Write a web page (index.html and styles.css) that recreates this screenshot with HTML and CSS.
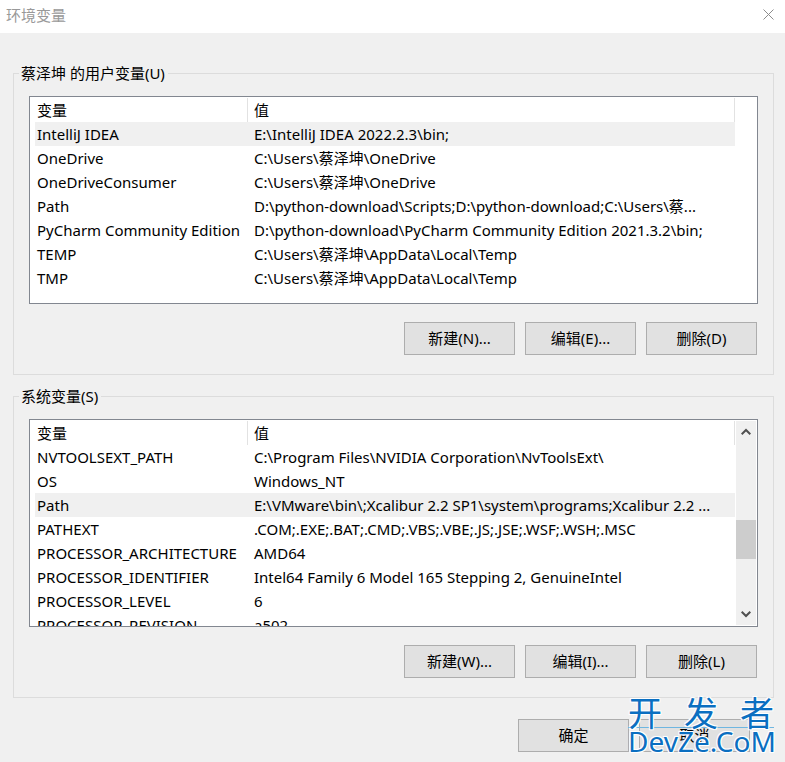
FILE: index.html
```html
<!DOCTYPE html>
<html lang="zh-CN">
<head>
<meta charset="utf-8">
<title>环境变量</title>
<link rel="stylesheet" href="styles.css">
</head>
<body>
<header class="titlebar">
  <h1 class="title">环境变量</h1>
  <button class="close" type="button" aria-label="关闭">
    <svg width="11" height="11" viewBox="0 0 11 11"><path d="M.5 .5l10 10M10.5 .5l-10 10" fill="none" stroke="#8c8c8c"/></svg>
  </button>
</header>
<main class="dialog">
  <fieldset class="group">
    <legend>蔡泽坤 的用户变量(U)</legend>
    <div class="list">
      <table class="vars">
        <thead><tr><th class="name">变量</th><th>值</th></tr></thead>
        <tbody>
          <tr class="selected"><td>IntelliJ IDEA</td><td>E:\IntelliJ IDEA 2022.2.3\bin;</td></tr>
          <tr><td>OneDrive</td><td>C:\Users\蔡泽坤\OneDrive</td></tr>
          <tr><td>OneDriveConsumer</td><td>C:\Users\蔡泽坤\OneDrive</td></tr>
          <tr><td>Path</td><td>D:\python-download\Scripts;D:\python-download;C:\Users\蔡...</td></tr>
          <tr><td>PyCharm Community Edition</td><td>D:\python-download\PyCharm Community Edition 2021.3.2\bin;</td></tr>
          <tr><td>TEMP</td><td>C:\Users\蔡泽坤\AppData\Local\Temp</td></tr>
          <tr><td>TMP</td><td>C:\Users\蔡泽坤\AppData\Local\Temp</td></tr>
        </tbody>
      </table>
      <div class="gutter"></div>
    </div>
    <div class="actions">
      <button class="btn" type="button">新建(N)...</button>
      <button class="btn" type="button">编辑(E)...</button>
      <button class="btn" type="button">删除(D)</button>
    </div>
  </fieldset>
  <fieldset class="group">
    <legend>系统变量(S)</legend>
    <div class="list">
      <table class="vars">
        <thead><tr><th class="name">变量</th><th>值</th></tr></thead>
        <tbody>
          <tr><td>NVTOOLSEXT_PATH</td><td>C:\Program Files\NVIDIA Corporation\NvToolsExt\</td></tr>
          <tr><td>OS</td><td>Windows_NT</td></tr>
          <tr class="selected"><td>Path</td><td>E:\VMware\bin\;Xcalibur 2.2 SP1\system\programs;Xcalibur 2.2 ...</td></tr>
          <tr><td>PATHEXT</td><td>.COM;.EXE;.BAT;.CMD;.VBS;.VBE;.JS;.JSE;.WSF;.WSH;.MSC</td></tr>
          <tr><td>PROCESSOR_ARCHITECTURE</td><td>AMD64</td></tr>
          <tr><td>PROCESSOR_IDENTIFIER</td><td>Intel64 Family 6 Model 165 Stepping 2, GenuineIntel</td></tr>
          <tr><td>PROCESSOR_LEVEL</td><td>6</td></tr>
          <tr><td>PROCESSOR_REVISION</td><td>a502</td></tr>
        </tbody>
      </table>
      <div class="gutter">
        <div class="scrollbar">
          <button class="arrow" type="button" aria-label="向上滚动"><svg width="10" height="8" viewBox="0 0 10 8"><path d="M.7 6.3L5 2l4.300 4.300" fill="none" stroke="#505050" stroke-width="2"/></svg></button>
          <div class="track"><div class="thumb"></div></div>
          <button class="arrow" type="button" aria-label="向下滚动"><svg width="10" height="8" viewBox="0 0 10 8"><path d="M.7 1.700L5 6l4.300-4.300" fill="none" stroke="#505050" stroke-width="2"/></svg></button>
        </div>
      </div>
    </div>
    <div class="actions">
      <button class="btn" type="button">新建(W)...</button>
      <button class="btn" type="button">编辑(I)...</button>
      <button class="btn" type="button">删除(L)</button>
    </div>
  </fieldset>
  <footer class="footer">
    <button class="btn" type="button">确定</button>
    <button class="btn" type="button">取消</button>
    <div class="watermark">
      <div class="mark-top"><span>开</span><span>发</span><span>者</span></div>
      <div class="mark-bottom">DevZe.CoM</div>
    </div>
  </footer>
</main>
</body>
</html>
```
FILE: styles.css
```css
* { box-sizing: border-box; }
body {
  margin: 0;
  background: #f0f0f0;
  color: #000;
  font: 15px/24px "Noto Sans", "Noto Sans CJK SC", sans-serif;
}
button { font: inherit; color: inherit; padding: 0; }
.titlebar {
  display: flex;
  justify-content: space-between;
  align-items: center;
  height: 33px;
  padding: 0 11px 4px 6px;
  background: #fff;
}
.title { margin: 0; font-size: 15px; font-weight: 400; color: #999; }
.close { display: flex; border: 0; background: none; }
.dialog { padding: 28px 11px 10px 13px; }
.group {
  min-width: 0;
  margin: 0 0 9px;
  padding: 11px 15px 19px;
  border: 1px solid #dcdcdc;
}
.group legend { margin-left: -10px; padding: 0 3px 0 2px; }
.group + .group { margin-bottom: 0; }
.list {
  display: flex;
  align-items: flex-start;
  height: 208px;
  padding: 1px 0 1px 5px;
  border: 1px solid #828790;
  background: #fff;
  overflow: hidden;
}
.vars {
  flex: 1;
  min-width: 0;
  table-layout: fixed;
  border-collapse: separate;
  border-spacing: 0;
}
.vars th, .vars td {
  height: 24px;
  padding: 0 0 0 6px;
  text-align: left;
  font-weight: 400;
  white-space: nowrap;
}
.vars th { border-right: 1px solid #e2e2e2; }
.vars th:first-child, .vars td:first-child { padding-left: 2px; }
.vars .name { width: 213px; }
.selected td { background: #f0f0f0; }
.gutter { display: flex; align-self: stretch; width: 22px; padding: 0 1px; }
.scrollbar { flex: 1; display: flex; flex-direction: column; background: #f0f0f0; }
.arrow {
  display: flex;
  align-items: center;
  justify-content: center;
  height: 22px;
  border: 0;
  background: none;
}
.track { flex: 1; padding-top: 77px; }
.thumb { height: 39px; background: #cdcdcd; }
.actions {
  display: flex;
  justify-content: flex-end;
  gap: 10px;
  margin-top: 18px;
  padding-right: 1px;
}
.btn {
  width: 111px;
  height: 33px;
  padding-bottom: 2px;
  border: 1px solid #adadad;
  background: #e1e1e1;
}
.footer {
  position: relative;
  display: flex;
  justify-content: flex-end;
  gap: 10px;
  margin-top: 21px;
  padding-right: 24px;
}
.watermark {
  position: absolute;
  right: 0;
  bottom: -2px;
  width: 146px;
  color: #0b6fc1;
  text-shadow: 1px 1px 0 #fff, -1px -1px 0 #fff, 1px -1px 0 #fff, -1px 1px 0 #fff;
  white-space: nowrap;
}
.mark-top {
  display: flex;
  justify-content: space-between;
  border-bottom: 1px solid #6fb6e0;
  font: 34px/30px "Noto Sans CJK SC", sans-serif;
}
.mark-bottom { font: 28px/26px "Noto Sans", sans-serif; }
```
